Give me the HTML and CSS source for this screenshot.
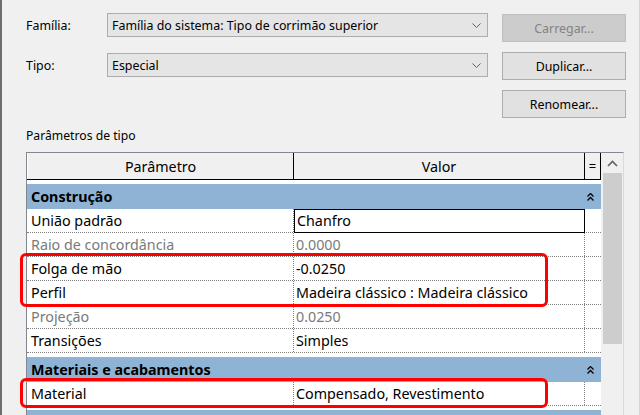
FILE: index.html
```html
<!DOCTYPE html>
<html lang="pt">
<head>
<meta charset="utf-8">
<title>Propriedades do tipo</title>
<link rel="stylesheet" href="styles.css">
</head>
<body>
<div class="window">
  <div class="top">
    <div class="fields">
      <div class="field">
        <span class="lbl">Família:</span>
        <div class="combo"><span class="combo-text">Família do sistema: Tipo de corrimão superior</span>
          <svg class="chev" width="9" height="5" viewBox="0 0 9 5"><path d="M0.5 0.5 L4.5 4.5 L8.5 0.5" fill="none" stroke="#606060" stroke-width="1"/></svg>
        </div>
      </div>
      <div class="field">
        <span class="lbl">Tipo:</span>
        <div class="combo"><span class="combo-text">Especial</span>
          <svg class="chev" width="9" height="5" viewBox="0 0 9 5"><path d="M0.5 0.5 L4.5 4.5 L8.5 0.5" fill="none" stroke="#606060" stroke-width="1"/></svg>
        </div>
      </div>
    </div>
    <div class="buttons">
      <button class="btn disabled">Carregar...</button>
      <button class="btn">Duplicar...</button>
      <button class="btn">Renomear...</button>
    </div>
  </div>

  <div class="section-label">Parâmetros de tipo</div>

  <div class="grid-box">
    <div class="grid">
      <div class="ghead">
        <div class="hc c1">Parâmetro</div>
        <div class="hc c2">Valor</div>
        <div class="hc c3">=</div>
      </div>

      <div class="cat">
        <span>Construção</span>
        <svg class="dchev" width="7" height="8" viewBox="0 0 7 8"><path d="M0.5 3.5 L3.5 0.5 L6.5 3.5 M0.5 7.5 L3.5 4.5 L6.5 7.5" fill="none" stroke="#000" stroke-width="1.3"/></svg>
      </div>
      <div class="row"><div class="c1">União padrão</div><div class="c2 edit">Chanfro</div><div class="c3"></div></div>
      <div class="row dim"><div class="c1">Raio de concordância</div><div class="c2">0.0000</div><div class="c3"></div></div>
      <div class="hl">
        <div class="row"><div class="c1">Folga de mão</div><div class="c2">-0.0250</div><div class="c3"></div></div>
        <div class="row"><div class="c1">Perfil</div><div class="c2">Madeira clássico : Madeira clássico</div><div class="c3"></div></div>
      </div>
      <div class="row dim"><div class="c1">Projeção</div><div class="c2">0.0250</div><div class="c3"></div></div>
      <div class="row"><div class="c1">Transições</div><div class="c2">Simples</div><div class="c3"></div></div>

      <div class="cat">
        <span>Materiais e acabamentos</span>
        <svg class="dchev" width="7" height="8" viewBox="0 0 7 8"><path d="M0.5 3.5 L3.5 0.5 L6.5 3.5 M0.5 7.5 L3.5 4.5 L6.5 7.5" fill="none" stroke="#000" stroke-width="1.3"/></svg>
      </div>
      <div class="hl">
        <div class="row"><div class="c1">Material</div><div class="c2">Compensado, Revestimento</div><div class="c3"></div></div>
      </div>

      <div class="cat">
        <span></span>
        <svg class="dchev" width="7" height="8" viewBox="0 0 7 8"><path d="M0.5 3.5 L3.5 0.5 L6.5 3.5 M0.5 7.5 L3.5 4.5 L6.5 7.5" fill="none" stroke="#000" stroke-width="1.3"/></svg>
      </div>
    </div>
    <div class="scrollbar">
      <div class="sb-up">
        <svg width="11" height="7" viewBox="0 0 11 7"><path d="M1 6 L5.5 1.5 L10 6" fill="none" stroke="#606060" stroke-width="1.6"/></svg>
      </div>
      <div class="thumb"></div>
    </div>
  </div>
</div>
</body>
</html>
```

FILE: styles.css
```css
* { box-sizing: border-box; }

html, body {
  margin: 0;
  padding: 0;
  background: #f0f0f0;
}

body {
  font-family: "Noto Sans", "Open Sans", sans-serif;
  color: #000;
}

.window {
  width: 640px;
  height: 415px;
  overflow: hidden;
  border-left: 2px solid #6e6e6e;
  border-right: 1px solid #d4d4d4;
  background: #f0f0f0;
  padding-left: 24px;
}

/* top area */
.top {
  display: flex;
  gap: 14px;
}

.fields {
  width: 462px;
  padding-top: 13px;
  display: flex;
  flex-direction: column;
  gap: 16px;
}

.field {
  display: flex;
  align-items: center;
  height: 24px;
  font-size: 12.4px;
}

.lbl {
  width: 81px;
}

.combo {
  width: 381px;
  height: 24px;
  border: 1px solid #adadad;
  background: #e5e5e5;
  display: flex;
  align-items: center;
  justify-content: space-between;
  padding: 0 6px 0 4px;
}

.chev { display: block; }

.buttons {
  padding-top: 14px;
  display: flex;
  flex-direction: column;
  gap: 10px;
}

.btn {
  width: 124px;
  height: 28px;
  border: 1px solid #adadad;
  background: #e1e1e1;
  font-family: inherit;
  font-size: 12.4px;
  color: #000;
  padding: 0;
}

.btn.disabled {
  background: #cccccc;
  border-color: #bfbfbf;
  color: #838383;
}

.section-label {
  margin-top: 10px;
  height: 16px;
  line-height: 16px;
  font-size: 12.2px;
  margin-bottom: 8px;
}

/* property grid */
.grid-box {
  width: 598px;
  height: 300px;
  border-top: 1px solid #828790;
  border-left: 1px solid #828790;
  border-right: 1px solid #dadada;
  display: flex;
  background: #f0f0f0;
}

.grid {
  width: 574px;
  background: #fff;
  font-size: 14.3px;
}

.ghead {
  display: flex;
  height: 27px;
  background: #f0f0f0;
  border-bottom: 1px solid #000;
  margin-bottom: 4px;
}

.c1 { width: 267px; }
.c2 { width: 291px; }
.c3 { width: 16px; }

.hc {
  display: flex;
  align-items: center;
  justify-content: center;
  border-right: 1px solid #000;
  font-size: 14.3px;
}

.hc.c1 { width: 267px; border-left: 1px solid #fff; }
.hc.c3 { font-size: 13px; }

.cat {
  height: 25px;
  background: #8eb3d4;
  display: flex;
  align-items: center;
  justify-content: space-between;
  padding: 0 7px 0 4px;
  font-weight: bold;
  font-size: 14.3px;
}

.dchev { display: block; }

.row {
  display: flex;
  height: 24px;
  border-bottom: 1px dotted #808080;
  line-height: 23px;
  white-space: nowrap;
}

.row + .cat,
.hl + .cat {
  margin-top: 4px;
}

.row .c1 {
  padding-left: 4px;
  border-right: 1px dotted #808080;
}

.row .c2 {
  padding-left: 2px;
  border-right: 1px dotted #808080;
}

.row .c2.edit {
  border: 1px solid #000;
  line-height: 21px;
  height: 24px;
}

.row.dim { color: #7a7a7a; }

.hl {
  position: relative;
}

.hl::after {
  content: "";
  position: absolute;
  left: -7px;
  top: -4px;
  bottom: -2px;
  width: 522px;
  border: 3px solid #f00;
  border-radius: 6px;
  pointer-events: none;
}

/* scrollbar */
.scrollbar {
  width: 22px;
  margin-left: 1px;
  background: #f0f0f0;
  display: flex;
  flex-direction: column;
  align-items: center;
}

.sb-up {
  height: 20px;
  width: 100%;
  display: flex;
  align-items: center;
  justify-content: center;
}

.thumb {
  width: 19px;
  height: 171px;
  background: #cdcdcd;
}
```
